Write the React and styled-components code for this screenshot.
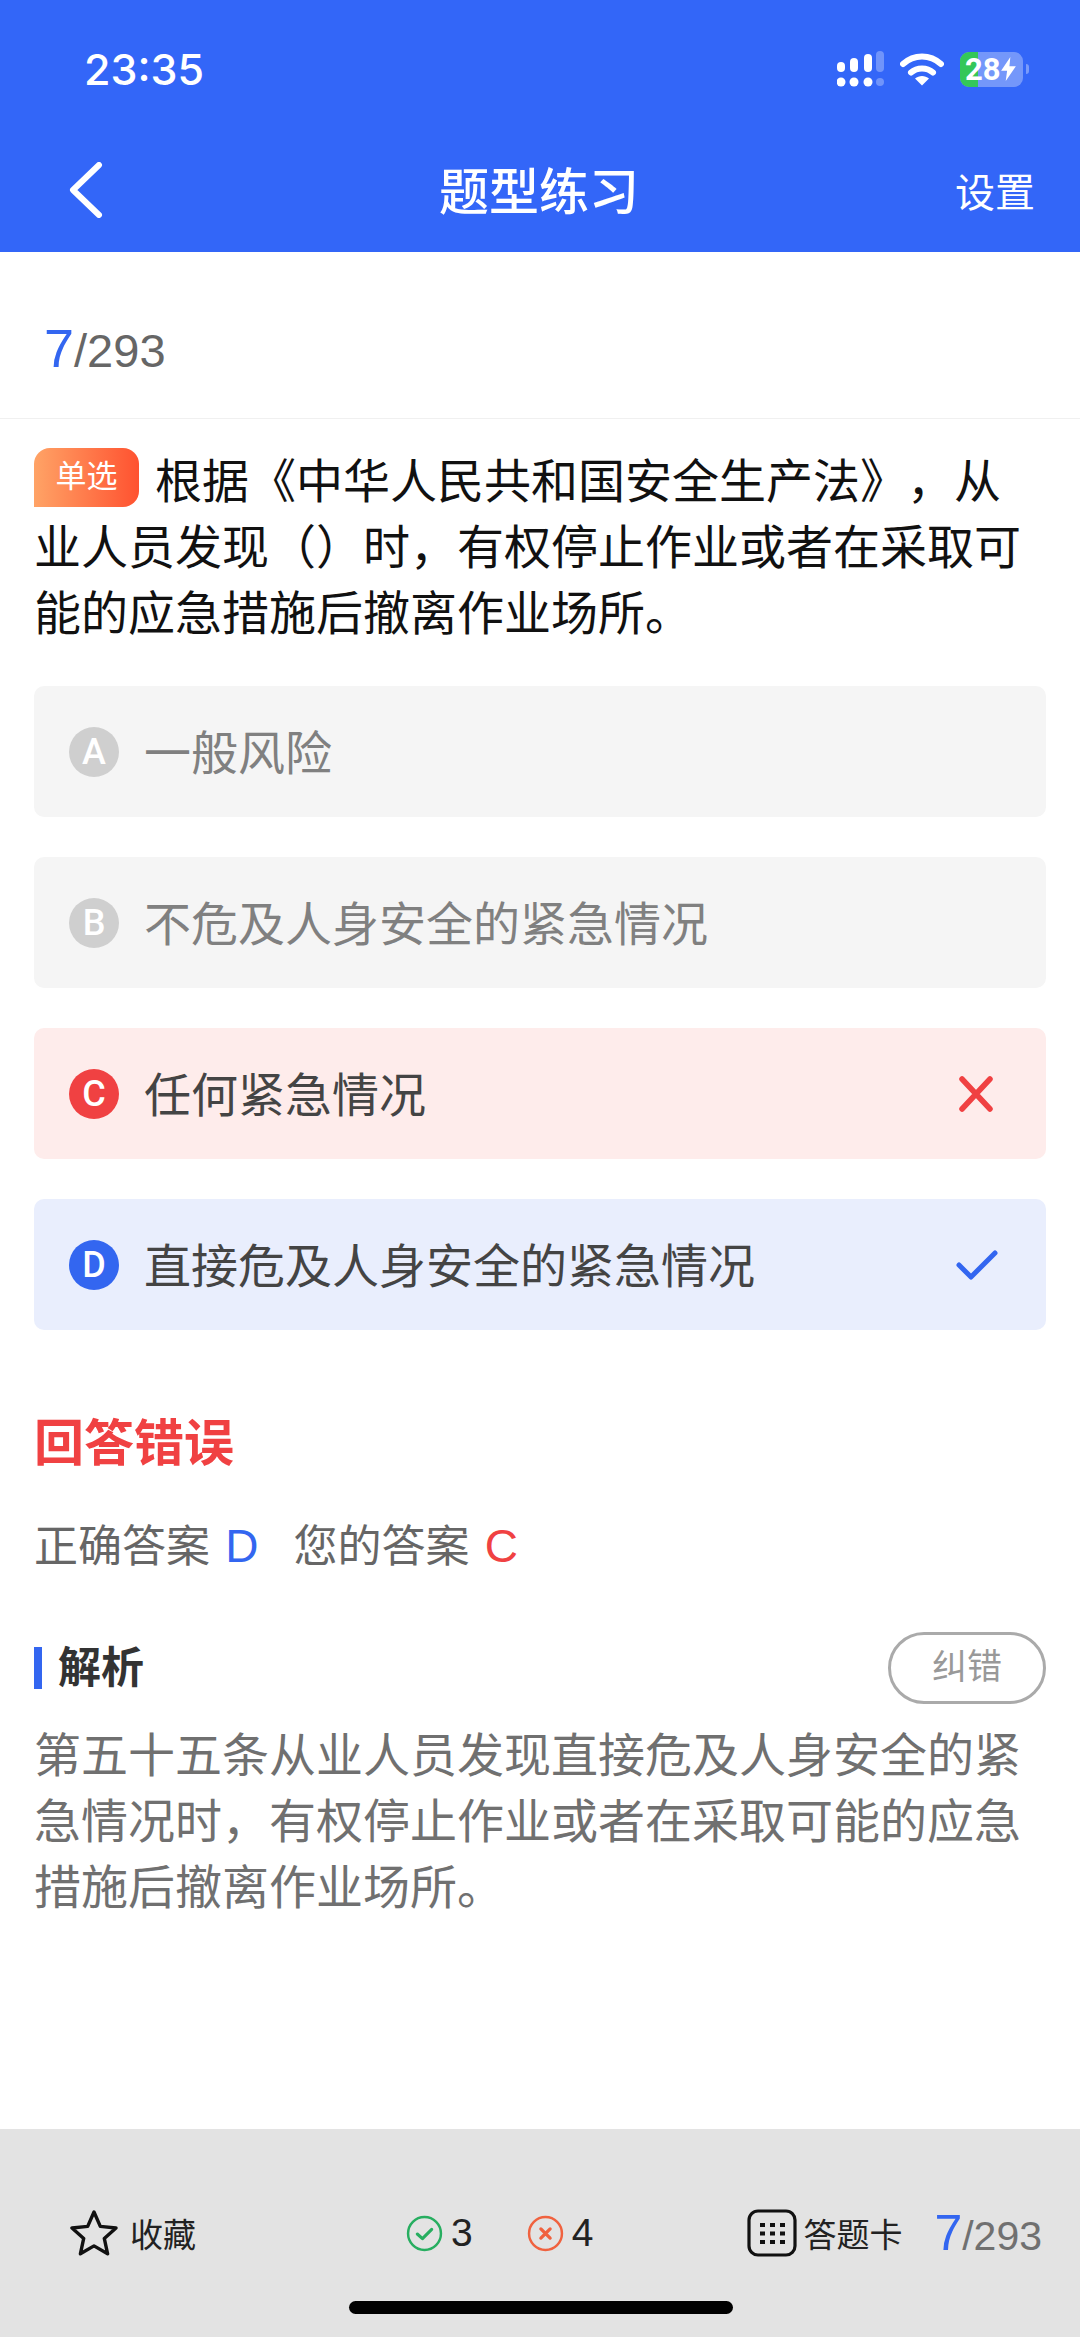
import styled, { createGlobalStyle } from "styled-components";

const GlobalStyle = createGlobalStyle`
  * {
    box-sizing: border-box;
  }
  html, body {
    margin: 0;
    padding: 0;
    background: #fff;
    font-family: "Liberation Sans", "Noto Sans CJK SC", sans-serif;
    text-spacing-trim: space-all;
  }
`;

const options = [
  { key: "A", text: "一般风险", state: "idle" },
  { key: "B", text: "不危及人身安全的紧急情况", state: "idle" },
  { key: "C", text: "任何紧急情况", state: "wrong" },
  { key: "D", text: "直接危及人身安全的紧急情况", state: "right" },
];

const optionColors = {
  idle: { bg: "#f5f5f5", badge: "#cfcfcf", text: "#808080" },
  wrong: { bg: "#feeceb", badge: "#f04142", text: "#444" },
  right: { bg: "#e9eefd", badge: "#3366f0", text: "#444" },
};

const App = () => {
  return (
    <>
      <GlobalStyle />
      <Page>
        <Header>
          <StatusBar>
            <Time>23:35</Time>
            <StatusIcons>
              <SignalIcon />
              <WifiIcon />
              <Battery>
                <BatteryLevel />
                <BatteryText>28</BatteryText>
                <BoltIcon />
              </Battery>
              <BatteryCap />
            </StatusIcons>
          </StatusBar>
          <NavBar>
            <BackIcon />
            <NavTitle>题型练习</NavTitle>
            <NavAction>设置</NavAction>
          </NavBar>
        </Header>

        <Progress>
          <Current>7</Current>
          <Total>/293</Total>
        </Progress>

        <Content>
          <Question>
            <TypeTag>单选</TypeTag>
            根据《中华人民共和国安全生产法》，从业人员发现（）时，有权停止作业或者在采取可能的应急措施后撤离作业场所。
          </Question>

          <OptionList>
            {options.map((o) => (
              <Option key={o.key} $state={o.state}>
                <OptionBadge $state={o.state}>{o.key}</OptionBadge>
                <OptionText $state={o.state}>{o.text}</OptionText>
                {o.state === "wrong" && <CrossIcon />}
                {o.state === "right" && <CheckIcon />}
              </Option>
            ))}
          </OptionList>

          <ResultTitle>回答错误</ResultTitle>
          <AnswerLine>
            <span>
              正确答案 <Letter $color="#3366f0">D</Letter>
            </span>
            <span>
              您的答案 <Letter $color="#f04142">C</Letter>
            </span>
          </AnswerLine>

          <AnalysisHead>
            <AnalysisTitle>解析</AnalysisTitle>
            <ReportButton>纠错</ReportButton>
          </AnalysisHead>
          <AnalysisText>
            第五十五条从业人员发现直接危及人身安全的紧急情况时，有权停止作业或者在采取可能的应急措施后撤离作业场所。
          </AnalysisText>
        </Content>

        <Footer>
          <FooterItem>
            <StarIcon />
            <FooterLabel>收藏</FooterLabel>
          </FooterItem>
          <Counts>
            <CountItem>
              <CircleCheckIcon />
              <CountNumber>3</CountNumber>
            </CountItem>
            <CountItem>
              <CircleCrossIcon />
              <CountNumber>4</CountNumber>
            </CountItem>
          </Counts>
          <FooterRight>
            <FooterItem>
              <GridIcon />
              <CardLabel>答题卡</CardLabel>
            </FooterItem>
            <FooterProgress>
              <FooterCurrent>7</FooterCurrent>
              <FooterTotal>/293</FooterTotal>
            </FooterProgress>
          </FooterRight>
          <HomeIndicator />
        </Footer>
      </Page>
    </>
  );
};

const SignalIcon = () => (
  <svg width="47" height="36" viewBox="0 0 47 36">
    <rect x="0" y="11" width="8" height="10" rx="4" fill="#fff" />
    <rect x="13" y="7" width="8" height="14" rx="4" fill="#fff" />
    <rect x="27" y="3" width="8" height="18" rx="4" fill="#fff" />
    <rect x="39" y="0" width="8" height="21" rx="4" fill="#fff" opacity="0.3" />
    <circle cx="4" cy="31" r="4.5" fill="#fff" />
    <circle cx="17" cy="31" r="4.5" fill="#fff" />
    <circle cx="31" cy="31" r="4.5" fill="#fff" />
    <circle cx="43" cy="31" r="4" fill="#fff" opacity="0.3" />
  </svg>
);

const WifiIcon = () => (
  <svg width="44" height="33" viewBox="0 0 44 33">
    <path d="M3 11 C14 1 30 1 41 11" fill="none" stroke="#fff" strokeWidth="6" strokeLinecap="round" />
    <path d="M11 19.5 C17 14 27 14 33 19.5" fill="none" stroke="#fff" strokeWidth="6" strokeLinecap="round" />
    <path d="M15 25.5 C19 22 25 22 29 25.5 L22 32.5 Z" fill="#fff" />
  </svg>
);

const BoltIcon = () => (
  <BoltSvg width="15" height="24" viewBox="0 0 16 26">
    <path d="M10 0 L0 15 H6.5 L5 26 L16 10 H9 Z" fill="#fff" />
  </BoltSvg>
);

const BackIcon = () => (
  <BackSvg width="36" height="56" viewBox="0 0 36 56">
    <path d="M31 3 L5 28 L31 53" fill="none" stroke="#fff" strokeWidth="6" strokeLinecap="round" strokeLinejoin="round" />
  </BackSvg>
);

const CrossIcon = () => (
  <CrossSvg width="36" height="36" viewBox="0 0 36 36">
    <path d="M4 3 L32 33 M32 3 L4 33" fill="none" stroke="#f04142" strokeWidth="5.5" strokeLinecap="round" />
  </CrossSvg>
);

const CheckIcon = () => (
  <svg width="42" height="30" viewBox="0 0 42 30">
    <path d="M3 15 L15 27 L39 3" fill="none" stroke="#3366f0" strokeWidth="5" strokeLinecap="round" strokeLinejoin="round" />
  </svg>
);

const StarIcon = () => (
  <svg width="48" height="48" viewBox="0 0 48 48">
    <path
      d="M24 3 L30.3 17.4 L46 19 L34.3 29.4 L37.6 44.8 L24 36.9 L10.4 44.8 L13.7 29.4 L2 19 L17.7 17.4 Z"
      fill="none"
      stroke="#111"
      strokeWidth="3.4"
      strokeLinejoin="round"
    />
  </svg>
);

const CircleCheckIcon = () => (
  <svg width="37" height="37" viewBox="0 0 36 36">
    <circle cx="18" cy="18" r="16" fill="none" stroke="#27ae60" strokeWidth="2.4" />
    <path d="M11 18.5 L16 23 L25 14" fill="none" stroke="#27ae60" strokeWidth="3" strokeLinecap="round" strokeLinejoin="round" />
  </svg>
);

const CircleCrossIcon = () => (
  <svg width="37" height="37" viewBox="0 0 36 36">
    <circle cx="18" cy="18" r="16" fill="none" stroke="#f0623f" strokeWidth="2.4" />
    <path d="M13.5 13.5 L22.5 22.5 M22.5 13.5 L13.5 22.5" fill="none" stroke="#f0623f" strokeWidth="3.2" strokeLinecap="round" />
  </svg>
);

const GridIcon = () => (
  <svg width="50" height="48" viewBox="0 0 50 48">
    <rect x="2" y="2" width="46" height="44" rx="9" fill="none" stroke="#111" strokeWidth="3.2" />
    {[0, 1, 2].map((row) =>
      [0, 1, 2].map((col) => (
        <rect key={`${row}-${col}`} x={13 + col * 10} y={14 + row * 8.5} width="5" height="4" fill="#111" />
      ))
    )}
  </svg>
);

const Page = styled.div`
  position: relative;
  width: 1080px;
  height: 2337px;
  display: flex;
  flex-direction: column;
  background: #fff;
  overflow: hidden;
`;

const Header = styled.header`
  height: 252px;
  background: #3366f8;
  color: #fff;
`;

const StatusBar = styled.div`
  height: 140px;
  padding: 46px 51px 0 84px;
  display: flex;
  justify-content: space-between;
  align-items: flex-start;
`;

const Time = styled.span`
  font-family: Inter, "Liberation Sans", sans-serif;
  font-size: 43px;
  font-weight: 500;
  line-height: 46px;
`;

const StatusIcons = styled.div`
  display: flex;
  align-items: center;
  height: 36px;
  margin-top: 5px;
  gap: 16px;
`;

const Battery = styled.div`
  position: relative;
  width: 63px;
  height: 35px;
  border-radius: 9px;
  background: rgba(255, 255, 255, 0.32);
  display: flex;
  align-items: center;
  padding-left: 5px;
`;

const BatteryLevel = styled.div`
  position: absolute;
  left: 0;
  top: 0;
  bottom: 0;
  width: 18px;
  border-radius: 9px 0 0 9px;
  background: #34c759;
`;

const BatteryText = styled.span`
  position: relative;
  font-family: Roboto, "Liberation Sans", sans-serif;
  font-size: 31px;
  font-weight: 700;
  line-height: 35px;
`;

const BoltSvg = styled.svg`
  position: relative;
  flex-shrink: 0;
`;

const BatteryCap = styled.div`
  width: 3px;
  height: 10px;
  margin-left: -13px;
  border-radius: 0 3px 3px 0;
  background: rgba(255, 255, 255, 0.35);
`;

const NavBar = styled.div`
  height: 112px;
  padding: 0 45px;
  display: grid;
  grid-template-columns: 1fr auto 1fr;
  align-items: center;
`;

const BackSvg = styled.svg`
  display: block;
  margin: -12px 0 0 23px;
`;

const NavTitle = styled.div`
  margin: -6px 2px 0 0;
  font-size: 50px;
  font-weight: 500;
  line-height: 60px;
`;

const NavAction = styled.div`
  justify-self: end;
  margin-top: -6px;
  font-size: 40px;
  line-height: 50px;
`;

const Progress = styled.div`
  height: 167px;
  padding: 26px 0 0 44px;
  border-bottom: 1px solid #f0f0f0;
  display: flex;
  align-items: baseline;
  line-height: 140px;
`;

const Current = styled.span`
  font-size: 54px;
  color: #3366f0;
`;

const Total = styled.span`
  font-size: 47px;
  color: #666;
`;

const Content = styled.main`
  flex: 1;
  padding: 29px 34px 0;
`;

const Question = styled.div`
  font-size: 47px;
  line-height: 66px;
  color: #111;
`;

const TypeTag = styled.span`
  display: inline-block;
  width: 105px;
  height: 59px;
  margin-right: 16px;
  border-radius: 16px 16px 16px 0;
  background: linear-gradient(90deg, #ffa366, #ff5230);
  color: #fff;
  font-size: 31px;
  line-height: 58px;
  text-align: center;
  vertical-align: 11px;
`;

const OptionList = styled.div`
  margin-top: 39px;
  display: flex;
  flex-direction: column;
  gap: 40px;
`;

const Option = styled.div`
  height: 131px;
  padding: 0 48px 0 35px;
  border-radius: 10px;
  display: flex;
  align-items: center;
  background: ${({ $state }) => optionColors[$state].bg};
`;

const OptionBadge = styled.div`
  width: 50px;
  height: 50px;
  border-radius: 50%;
  flex-shrink: 0;
  display: flex;
  align-items: center;
  justify-content: center;
  color: #fff;
  font-family: Roboto, "Liberation Sans", sans-serif;
  font-size: 36px;
  font-weight: 500;
  background: ${({ $state }) => optionColors[$state].badge};
`;

const OptionText = styled.div`
  flex: 1;
  margin-left: 25px;
  padding-top: 4px;
  font-size: 47px;
  line-height: 60px;
  color: ${({ $state }) => optionColors[$state].text};
`;

const CrossSvg = styled.svg`
  flex-shrink: 0;
  margin-right: 4px;
`;

const ResultTitle = styled.div`
  margin-top: 84px;
  font-size: 50px;
  font-weight: 700;
  line-height: 60px;
  color: #f04142;
`;

const AnswerLine = styled.div`
  margin-top: 42px;
  display: flex;
  gap: 35px;
  font-size: 44px;
  line-height: 60px;
  color: #666;
`;

const Letter = styled.span`
  margin-left: 3px;
  font-size: 46px;
  color: ${({ $color }) => $color};
`;

const AnalysisHead = styled.div`
  margin-top: 55px;
  height: 72px;
  display: flex;
  align-items: center;
  justify-content: space-between;
`;

const AnalysisTitle = styled.div`
  padding-left: 16px;
  border-left: 8px solid #3366f0;
  font-size: 43px;
  font-weight: 700;
  line-height: 42px;
  color: #333;
`;

const ReportButton = styled.div`
  width: 158px;
  height: 72px;
  border: 3px solid #aaa;
  border-radius: 36px;
  color: #999;
  font-size: 35px;
  line-height: 64px;
  text-align: center;
`;

const AnalysisText = styled.div`
  margin-top: 19px;
  font-size: 47px;
  line-height: 66px;
  color: #707070;
`;

const Footer = styled.footer`
  position: relative;
  height: 208px;
  padding: 79px 38px 0 70px;
  background: #e3e3e3;
  display: flex;
  align-items: flex-start;
`;

const FooterItem = styled.div`
  display: flex;
  align-items: center;
  height: 50px;
`;

const FooterLabel = styled.span`
  margin-left: 12px;
  font-size: 33px;
  color: #222;
`;

const CardLabel = styled.span`
  margin-left: 6px;
  font-size: 33px;
  color: #222;
`;

const Counts = styled.div`
  margin-left: 210px;
  display: flex;
  gap: 54px;
`;

const CountItem = styled.div`
  display: flex;
  align-items: center;
  height: 50px;
  gap: 8px;
`;

const CountNumber = styled.span`
  font-size: 39px;
  color: #222;
`;

const FooterRight = styled.div`
  margin-left: auto;
  display: flex;
  align-items: flex-start;
  gap: 32px;
`;

const FooterProgress = styled.div`
  display: flex;
  align-items: baseline;
  line-height: 50px;
`;

const FooterCurrent = styled.span`
  font-size: 50px;
  color: #3366f0;
`;

const FooterTotal = styled.span`
  font-size: 41px;
  color: #707070;
`;

const HomeIndicator = styled.div`
  position: absolute;
  left: 349px;
  top: 172px;
  width: 384px;
  height: 13px;
  border-radius: 7px;
  background: #000;
`;

export default App;
